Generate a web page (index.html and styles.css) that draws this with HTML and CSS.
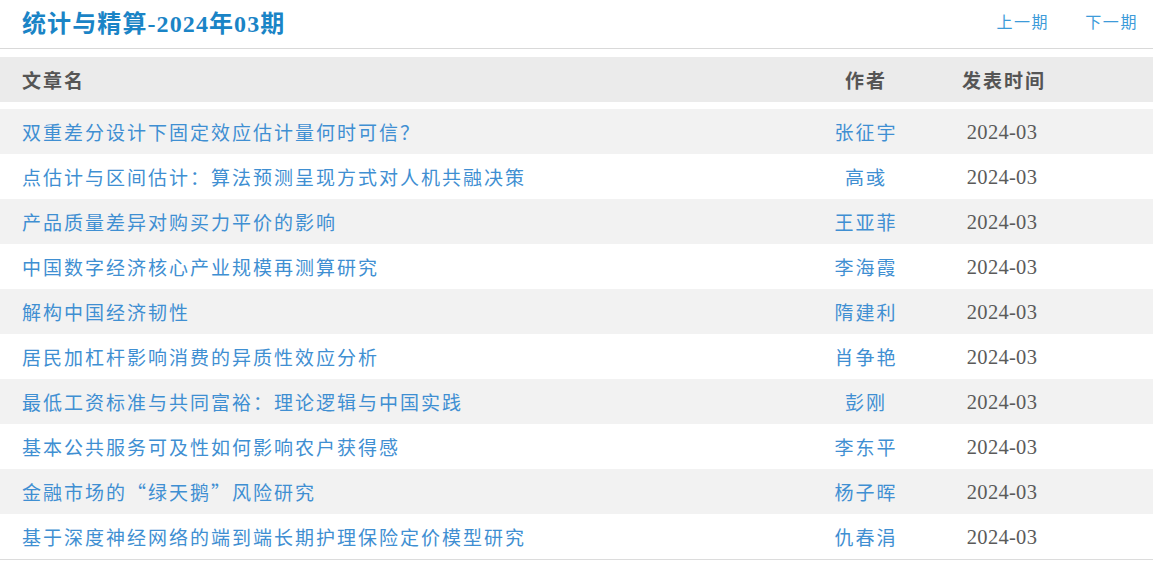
FILE: index.html
```html
<!DOCTYPE html>
<html lang="zh">
<head>
<meta charset="utf-8">
<title>统计与精算-2024年03期</title>
<link rel="stylesheet" href="styles.css">
</head>
<body>
<div class="page">
  <header class="top">
    <h1 class="issue-title">统计与精算-2024年03期</h1>
    <nav class="pager">
      <a href="#" class="pager-link">上一期</a>
      <a href="#" class="pager-link">下一期</a>
    </nav>
  </header>
  <div class="table">
    <div class="row head">
      <div class="c-title">文章名</div>
      <div class="c-author">作者</div>
      <div class="c-date">发表时间</div>
    </div>
    <div class="body">
      <div class="row"><a href="#" class="c-title">双重差分设计下固定效应估计量何时可信？</a><a href="#" class="c-author">张征宇</a><div class="c-date">2024-03</div></div>
      <div class="row"><a href="#" class="c-title">点估计与区间估计：算法预测呈现方式对人机共融决策</a><a href="#" class="c-author">高彧</a><div class="c-date">2024-03</div></div>
      <div class="row"><a href="#" class="c-title">产品质量差异对购买力平价的影响</a><a href="#" class="c-author">王亚菲</a><div class="c-date">2024-03</div></div>
      <div class="row"><a href="#" class="c-title">中国数字经济核心产业规模再测算研究</a><a href="#" class="c-author">李海霞</a><div class="c-date">2024-03</div></div>
      <div class="row"><a href="#" class="c-title">解构中国经济韧性</a><a href="#" class="c-author">隋建利</a><div class="c-date">2024-03</div></div>
      <div class="row"><a href="#" class="c-title">居民加杠杆影响消费的异质性效应分析</a><a href="#" class="c-author">肖争艳</a><div class="c-date">2024-03</div></div>
      <div class="row"><a href="#" class="c-title">最低工资标准与共同富裕：理论逻辑与中国实践</a><a href="#" class="c-author">彭刚</a><div class="c-date">2024-03</div></div>
      <div class="row"><a href="#" class="c-title">基本公共服务可及性如何影响农户获得感</a><a href="#" class="c-author">李东平</a><div class="c-date">2024-03</div></div>
      <div class="row"><a href="#" class="c-title">金融市场的“绿天鹅”风险研究</a><a href="#" class="c-author">杨子晖</a><div class="c-date">2024-03</div></div>
      <div class="row"><a href="#" class="c-title">基于深度神经网络的端到端长期护理保险定价模型研究</a><a href="#" class="c-author">仇春涓</a><div class="c-date">2024-03</div></div>
    </div>
  </div>
</div>
</body>
</html>
```
FILE: styles.css
```css
* { box-sizing: border-box; }
html, body { margin: 0; padding: 0; background: #fff; }
body {
  font-family: "Liberation Serif", "Noto Sans CJK SC", serif;
  color: #555;
}
a { text-decoration: none; }
.page { width: 1153px; }
.top {
  height: 49px;
  display: flex;
  align-items: center;
  justify-content: space-between;
  border-bottom: 1px solid #d9d9d9;
  padding: 0 15px 6px 22px;
}
.issue-title {
  margin: 0;
  font-size: 24px;
  font-weight: bold;
  color: #1a84c6;
  letter-spacing: 1.1px;
}
.pager { display: flex; gap: 36px; }
.pager-link {
  font-size: 16px;
  letter-spacing: 1.6px;
  color: #3d9bd9;
}
.table { margin-top: 8px; border-bottom: 1px solid #dcdcdc; }
.row {
  display: grid;
  grid-template-columns: 800px 130px 146px 1fr;
  align-items: center;
  height: 45px;
}
.head {
  background: #ebebeb;
  font-weight: bold;
  color: #555;
  font-size: 19px;
  letter-spacing: 2px;
  margin-bottom: 7px;
}
.body .row:nth-child(odd) { background: #f2f2f2; }
.c-title {
  padding-left: 22px;
  font-family: "Noto Sans CJK SC", sans-serif;
  font-size: 19px;
  letter-spacing: 2px;
}
.body .c-title { color: #3f8fd2; }
.c-author {
  text-align: center;
  font-size: 19px;
  letter-spacing: 2px;
  padding-left: 2px;
}
.body .c-author { color: #3f8fd2; }
.c-date {
  text-align: center;
  font-size: 19px;
  letter-spacing: 2px;
  padding-left: 2px;
}
.body .c-date {
  font-size: 20.5px;
  letter-spacing: 0.3px;
  color: #5a5a5a;
  padding-left: 0;
  padding-right: 2px;
  padding-top: 2px;
}
```
